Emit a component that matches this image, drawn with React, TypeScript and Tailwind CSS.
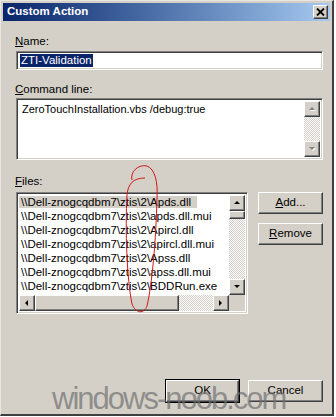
import React from 'react';

const files = [
  '\\\\Dell-znogcqdbm7\\ztis\\2\\Apds.dll',
  '\\\\Dell-znogcqdbm7\\ztis\\2\\apds.dll.mui',
  '\\\\Dell-znogcqdbm7\\ztis\\2\\Apircl.dll',
  '\\\\Dell-znogcqdbm7\\ztis\\2\\apircl.dll.mui',
  '\\\\Dell-znogcqdbm7\\ztis\\2\\Apss.dll',
  '\\\\Dell-znogcqdbm7\\ztis\\2\\apss.dll.mui',
  '\\\\Dell-znogcqdbm7\\ztis\\2\\BDDRun.exe',
  '\\\\Dell-znogcqdbm7\\ztis\\2\\bcdboot.exe',
];

const sunken =
  'border border-t-[#808080] border-l-[#808080] border-b-white border-r-white shadow-[inset_1px_1px_0_#404040,inset_-1px_-1px_0_#d4d0c8]';
const raised =
  'border border-t-white border-l-white border-r-[#404040] border-b-[#404040] shadow-[inset_-1px_-1px_0_#808080]';
const track =
  'bg-[repeating-conic-gradient(#ffffff_0_25%,#d4d0c8_0_50%)] bg-[length:2px_2px]';

function Arrow({ dir, disabled }: { dir: 'up' | 'down' | 'left' | 'right'; disabled?: boolean }) {
  const pts = {
    up: '1,5 4,2 7,5',
    down: '1,2 4,5 7,2',
    left: '5,1 2,4 5,7',
    right: '2,1 5,4 2,7',
  }[dir];
  return (
    <div className={`w-4 h-4 shrink-0 bg-[#d4d0c8] ${raised} flex items-center justify-center`}>
      <svg width="8" height="8" viewBox="0 0 8 8">
        {disabled && <polygon points={pts} fill="#ffffff" transform="translate(1,1)" />}
        <polygon points={pts} fill={disabled ? '#808080' : '#000000'} />
      </svg>
    </div>
  );
}

function Btn({ label, u, def }: { label: string; u?: number; def?: boolean }) {
  const chars = label.split('');
  return (
    <div
      className={`h-[22px] bg-[#d4d0c8] flex items-center justify-center text-[11.5px] text-black ${
        def ? 'outline outline-1 outline-black ' + raised : raised
      }`}
    >
      {chars.map((c, i) => (
        <span key={i} className={i === u ? 'underline' : ''}>
          {c}
        </span>
      ))}
    </div>
  );
}

export default function App() {
  return (
    <div
      className="relative w-[336px] h-[417px] overflow-hidden bg-white"
      style={{ fontFamily: '"Liberation Sans", Arial, sans-serif' }}
    >
      <div className="w-[334px] h-[416px] bg-[#d4d0c8] border-l border-t border-[#e8e6e0] border-r-2 border-b-2 border-r-[#404040] border-b-[#404040] flex flex-col">
        {/* title bar */}
        <div className="mx-[2px] mt-[2px] h-[18px] bg-gradient-to-r from-[#0a246a] to-[#a6caf0] flex items-center justify-between pl-[4px] pr-[2px]">
          <span className="text-white font-bold text-[11.5px]">Custom Action</span>
          <div className={`w-[15px] h-[14px] bg-[#d4d0c8] ${raised} flex items-center justify-center`}>
            <svg width="9" height="8" viewBox="0 0 9 8">
              <path d="M1 0.5 L8 7.5 M8 0.5 L1 7.5" stroke="#000" strokeWidth="1.8" />
            </svg>
          </div>
        </div>

        <div className="pl-[14px] pr-[9px] text-[11.5px] text-black">
          <div className="mt-[13px] h-[14px] leading-[14px]">
            <span className="underline">N</span>ame:
          </div>
          <div className={`mt-[3px] ml-[1px] h-[19px] bg-white ${sunken} flex items-center px-[3px]`}>
            <span className="bg-[#0a246a] text-white leading-[13px] px-[1px]">ZTI-Validation</span>
          </div>

          <div className="mt-[12px] h-[14px] leading-[14px]">
            <span className="underline">C</span>ommand line:
          </div>
          <div className={`mt-[2px] ml-[1px] h-[62px] bg-white ${sunken} flex p-[2px]`}>
            <div className="flex-1 pl-[3px] pt-[1px] leading-[14px] text-[11px]">ZeroTouchInstallation.vbs /debug:true</div>
            <div className={`w-4 flex flex-col ${track}`}>
              <Arrow dir="up" disabled />
              <div className="flex-1" />
              <Arrow dir="down" disabled />
            </div>
          </div>

          <div className="mt-[14px] h-[14px] leading-[14px]">
            <span className="underline">F</span>iles:
          </div>
          <div className="mt-[4px] flex">
            <div className={`ml-[1px] w-[232px] h-[122px] bg-white ${sunken} p-[2px] flex flex-col`}>
              <div className="flex flex-1 min-h-0">
                <div className="flex-1 overflow-hidden">
                  {files.map((f, i) => (
                    <div key={f} className="h-[14px] leading-[14px] whitespace-nowrap">
                      <span className={i === 0 ? 'bg-[#d4d0c8] pl-[2px] pr-[6px]' : 'pl-[2px]'}>{f}</span>
                    </div>
                  ))}
                </div>
                <div className={`w-4 flex flex-col ${track}`}>
                  <Arrow dir="up" />
                  <div className={`h-[8px] bg-[#d4d0c8] ${raised}`} />
                  <div className="flex-1" />
                  <Arrow dir="down" />
                </div>
              </div>
              <div className="flex h-4">
                <div className={`flex-1 flex ${track}`}>
                  <Arrow dir="left" />
                  <div className={`w-[144px] bg-[#d4d0c8] ${raised}`} />
                  <div className="flex-1" />
                  <Arrow dir="right" />
                </div>
                <div className="w-4 bg-[#d4d0c8]" />
              </div>
            </div>
            <div className="ml-[10px] flex-1 flex flex-col gap-[9px]">
              <Btn label="Add..." u={0} />
              <Btn label="Remove" u={0} />
            </div>
          </div>

          <div className="mt-[66px] flex justify-end gap-[9px]">
            <div className="w-[73px]">
              <Btn label="OK" def />
            </div>
            <div className="w-[75px]">
              <Btn label="Cancel" />
            </div>
          </div>
        </div>
      </div>

      {/* red hand-drawn mark */}
      <svg className="absolute left-0 top-0 pointer-events-none" width="336" height="417">
        <path
          d="M132 180 C130 172 138 164 147 166 C155 169 158 182 157 198 C156 240 152 285 147 306 C144 314 136 314 132 304 C127 280 125 230 127 195 C128 184 133 178 145 178"
          fill="none"
          stroke="#d01818"
          strokeWidth="1"
        />
      </svg>

      {/* watermark */}
      <div className="absolute left-[52px] top-[382px] text-[31px] leading-[34px] text-[#6f6f6f]/70 tracking-[-2px] pointer-events-none whitespace-nowrap">
        windows-noob.com
      </div>
    </div>
  );
}
